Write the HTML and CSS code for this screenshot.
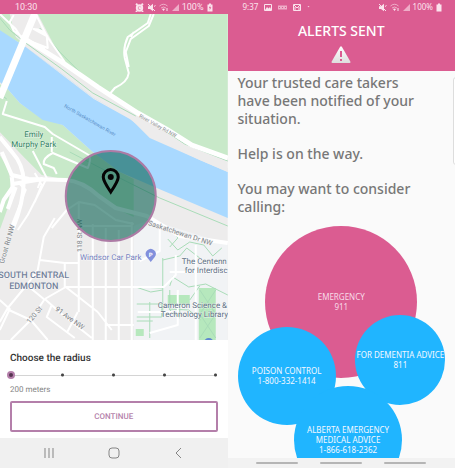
FILE: index.html
```html
<!DOCTYPE html>
<html lang="en">
<head>
<meta charset="utf-8">
<meta name="viewport" content="width=device-width, initial-scale=1">
<title>Safe zone and alerts</title>
<link rel="stylesheet" href="styles.css">
</head>
<body>
<main class="screens">
  <section class="phone phone-map">
    <header class="status">
      <span>10:30</span>
      <span class="status-right">
        <svg width="9" height="9" viewBox="0 0 9 9"><circle cx="4.500" cy="5" r="2.700" class="line bold"/><path class="line bold" d="M1 2 2.500.8M8 2 6.500.8M4.500 3.500V5.200H6M2 8 1 9M7 8 8 9"/></svg>
        <svg width="9" height="9" viewBox="0 0 9 9"><path class="solid" d="M1 3.200h2L6 .8v7.400L3 6H1z"/><path class="line" d="M1 1 8 8M7 3.500 8.500 2.500"/></svg>
        <svg class="wide" width="10" height="9" viewBox="0 0 10 9"><path class="line dim" d="M.5 3Q4.500-.5 8.500 3M2 5Q4.500 3 7 5"/><path class="solid" d="M3 6Q4.500 5 6 6L4.500 8z"/><path class="line" d="M8 5v3"/></svg>
        <svg width="7" height="9" viewBox="0 0 7 9"><path class="solid dim" d="M0 8 7 1V8z"/></svg>
        <span>100%</span>
        <svg width="6" height="9" viewBox="0 0 6 9"><path class="solid" d="M.5 1.500H2V.5h2v1h1.500v7h-5z"/><path class="bolt" d="M3.500 2 1.800 5.200H3L2.500 7.500 4.300 4.300H3z"/></svg>
      </span>
    </header>

    <svg class="map" viewBox="0 14 228 326" preserveAspectRatio="xMidYMid slice" role="img" aria-label="Map of South Central Edmonton">
      <rect class="land" y="14" width="228" height="326"/>
      <path class="campus" d="M134 226 150 220 228 244V340H134z"/>
      <path class="park" d="M0 14H228V158L190 145 160 127 135 111 100 88 62 60 38 14z"/>
      <path class="park" d="M0 14H10L16 37 26 46 0 32zM0 84 7 88 20 103 40 117 63 125 93 152 120 172 134 179V217L115 208 100 196 84 184 58 178 42 175 25 158 0 132z"/>
      <path class="park" d="M0 155 8 168 11 182 8 208 0 230z"/>
      <path class="water" d="M0 30 26 47 60 72 94 98 130 118 150 138 200 160 228 172V218L157 188 120 172 93 152 63 125 43 120 20 103 7 88 0 82z"/>
      <path class="land" d="M26 47 60 72 94 98 130 117 152 133 200 154 228 168V172L200 160 158 140 130 119 94 99 60 73z"/>
      <path class="land" d="M11 17 35 15 62 60 44 47 25 37 15 32z"/>

      <g class="grass">
        <path d="M168 295h22v10h-22zM199 288h17v52h-17zM136 329h8v7h-8zM199 332h14v8h-14z"/>
      </g>
      <g class="path">
        <path d="M0 18 10 30 26 43 62 69 93 93 136 116M40 28 60 52 94 86 140 114 185 144 228 161M70 152 118 177 160 198 228 226M0 94 7 99"/>
        <path d="M170 247 178 238 174 230M168 239 178 250 190 242 204 245 213 256 222 248M163 258 163 288 137 287M163 260 180 256 187 248 200 258M170 286 173 277 189 287 206 284 228 295M163 290 151 292 136 287M163 288v28M137 304h25v13h-25M150 302v36M137 321h16M170 290v20l10 8M169 309l20 1 12 10M180 305v12M190 300l10-14M200 290l16 24-16 24M216 290l-16 24 16 24"/>
      </g>

      <g class="minor">
        <path d="M0 14 16 29 23 40 45 49M14 15 10 22 14 31 27 40 48 48 47 36 34 29M36 14 47 36 65 62M33 29Q44 29 48 37M151 14 148 23 128 37Q123 48 125 58L129 73Q128 82 115 88L110 94M154 14 149 26 131 39 126 52 129 67M134 32 131 37"/>
        <path d="M7 101 3 114 45 127 53 134 89 155Q92 159 88 168L53 153Q43 158 44 164L54 168 57 174M52 137 52 152M18 182 26 190 10 230M33 151 47 178 28 215 18 230M42 178 38 188M35 173 42 185 35 202"/>
        <path d="M55 218 44 237 38 270 27 285 8 308 0 322M52 228 67 210 79 202 95 205 116 220 134 224M40 260 65 263H79M79 202V312M93 224V340M106 228V340M119 230V340M132 222V340M79 226H132M65 263V288M66 287H134M45 299 66 287 98 312M45 299 62 314 92 338M45 299 31 320 11 340M7 309 31 320 48 340M52 305 47 317 75 338M78 312 67 333M98 312 112 330M106 325H134M27 285 44 299M0 300 10 309 0 330M134 287h30l12-12v-20M178 290v35l-28 8M196 245v95M170 272h58M138 312h35M160 226v25l-20 10"/>
      </g>
      <g class="major">
        <path d="M0 137 13 153Q23 164 24 181Q24 202 13 229M2 152 12 175 29 179 66 180Q83 181 99 196L116 208 147 216 180 236 228 243M13 184 43 179M12 177 13 187 4 200 0 212M16 187 8 209"/>
      </g>
      <path class="highway" d="M27 40 62 62 98 87 138 113 168 130 192 145 228 158"/>
      <path class="bridge" d="M35 14 0 98"/>

      <g class="road-label">
        <text transform="translate(139 117) rotate(29)">River Valley Rd NW</text>
        <text class="river" transform="translate(64 107) rotate(30)">North Saskatchewan River</text>
        <text class="big" transform="translate(148 225) rotate(18)">Saskatchewan Dr NW</text>
        <text class="big" transform="translate(82 252) rotate(-90)">118 St NW</text>
        <text class="big" transform="translate(4 264) rotate(-74)">Groat Rd NW</text>
        <text class="big" transform="translate(30 324) rotate(-50)">120 St</text>
        <text class="big" transform="translate(55 310) rotate(36)">91 Ave NW</text>
      </g>
      <g class="place">
        <text class="park-name" x="34" y="137">Emily</text>
        <text class="park-name" x="34" y="147">Murphy Park</text>
        <text class="district" x="34" y="278">SOUTH CENTRAL</text>
        <text class="district" x="34" y="289">EDMONTON</text>
        <text class="parking" x="111" y="260">Windsor Car Park</text>
        <text class="start" x="182" y="264">The Centenn</text>
        <text class="start" x="185" y="273">for Interdisc</text>
        <text class="start" x="158" y="308">Cameron Science &amp;</text>
        <text class="start" x="161" y="317">Technology Library</text>
      </g>
      <path class="poi" d="M151 262 147 257A5 5 0 1 1 155 257z"/>
      <text class="poi-letter" x="151" y="257">P</text>
      <circle class="poi-blue" cx="209" cy="343" r="5"/>

      <circle class="zone" cx="111" cy="196" r="45"/>
      <path class="pin" d="M111 192C107 186 103.500 181 103.500 177A7.500 7.500 0 0 1 118.500 177C118.500 181 115 186 111 192z"/>
      <circle class="pin-dot" cx="111" cy="177" r="3"/>
    </svg>

    <form class="radius">
      <label class="radius-title" for="radius">Choose the radius</label>
      <input class="slider" id="radius" type="range" min="200" max="1000" step="200" value="200">
      <output class="radius-value" for="radius">200 meters</output>
      <button class="continue" type="button">CONTINUE</button>
    </form>

    <nav class="system-nav" aria-label="System">
      <button type="button" aria-label="Recent apps"><svg width="12" height="12" viewBox="0 0 12 12"><path d="M2 1v10M6 1v10M10 1v10"/></svg></button>
      <button type="button" aria-label="Home"><svg width="12" height="12" viewBox="0 0 12 12"><rect x="1" y="1" width="10" height="10" rx="3"/></svg></button>
      <button type="button" aria-label="Back"><svg width="12" height="12" viewBox="0 0 12 12"><path d="M8 1 3 6l5 5"/></svg></button>
    </nav>
  </section>

  <section class="phone phone-alert">
    <header class="alert-header">
      <div class="status">
        <span class="status-left">
          <span>9:37</span>
          <svg width="8" height="9" viewBox="0 0 8 9"><path class="line" d="M.5 1.500h7v6h-7z"/><path class="solid" d="M1 7 3 4l1.500 1.500L6 4l1.500 3z"/></svg>
          <svg width="9" height="9" viewBox="0 0 9 9"><path class="solid dim" d="M0 2.500h9v4H0z"/><path class="bolt" d="M1 4h1v1H1zM4 4h1v1H4zM7 4h1v1H7z"/></svg>
          <svg width="8" height="9" viewBox="0 0 8 9"><path class="line" d="M.5 1.500h7v6h-7zM1 2l3 3 3-3M2 7V4M6 7V4"/></svg>
          <span>·</span>
        </span>
        <span class="status-right">
          <svg width="9" height="9" viewBox="0 0 9 9"><path class="solid" d="M1 3.200h2L6 .8v7.400L3 6H1z"/><path class="line" d="M1 1 8 8M7 3.500 8.500 2.500"/></svg>
          <svg class="wide" width="10" height="9" viewBox="0 0 10 9"><path class="line dim" d="M.5 3Q4.500-.5 8.500 3M2 5Q4.500 3 7 5"/><path class="solid" d="M3 6Q4.500 5 6 6L4.500 8z"/><path class="line" d="M8 5v3"/></svg>
          <svg width="7" height="9" viewBox="0 0 7 9"><path class="solid dim" d="M0 8 7 1V8z"/></svg>
          <span>100%</span>
          <svg width="6" height="9" viewBox="0 0 6 9"><path class="solid" d="M.5 1.500H2V.5h2v1h1.500v7h-5z"/></svg>
        </span>
      </div>
      <h1>ALERTS SENT</h1>
      <svg class="warning" width="20" height="18" viewBox="0 0 20 18"><defs><linearGradient id="shine" x2="0" y2="1"><stop offset="0" stop-color="#fff"/><stop offset="1" stop-color="#dedede"/></linearGradient></defs><path fill="url(#shine)" d="M9 1Q10-.5 11 1L19.300 15.500Q20 17 18.500 17H1.500Q0 17 .7 15.500z"/><path class="mark" d="M10 5v6M10 13v2"/></svg>
    </header>
    <div class="message">
      <p>Your trusted care takers<br>have been notified of your<br>situation.</p>
      <p>Help is on the way.</p>
      <p>You may want to consider<br>calling:</p>
      <span class="edge-handle"></span>
    </div>
    <div class="contacts">
      <a class="bubble emergency" href="tel:911">EMERGENCY<br>911</a>
      <a class="bubble poison" href="tel:18003321414">POISON CONTROL<br>1-800-332-1414</a>
      <a class="bubble dementia" href="tel:811">FOR DEMENTIA ADVICE<br>811</a>
      <a class="bubble medical" href="tel:18666182362">ALBERTA EMERGENCY<br>MEDICAL ADVICE<br>1-866-618-2362</a>
    </div>
    <div class="gesture-nav"><span></span><span></span><span></span></div>
  </section>
</main>
</body>
</html>
```
FILE: styles.css
```css
:root {
  --pink: #db5c91;
  --mauve: #b47faa;
  --blue: #20b5ff;
}

* { box-sizing: border-box; }

body {
  margin: 0;
  font-family: Roboto, sans-serif;
}

.screens {
  display: grid;
  grid-template-columns: 1fr 1fr;
  min-height: 100vh;
}

.phone {
  display: flex;
  flex-direction: column;
  min-width: 0;
  overflow: hidden;
}

.phone-map { background: #fff; }
.phone-alert {
  background: #fafafa;
  font-family: "Noto Sans", sans-serif;
}

.status {
  display: flex;
  justify-content: space-between;
  align-items: center;
  height: 14px;
  padding: 0 15px;
  background: var(--pink);
  color: #fbe3ed;
  font-size: 9px;
  line-height: 14px;
}
.status-left, .status-right { display: flex; align-items: center; gap: 4px; }
.status-right { gap: 3px; }
.status-left { gap: 6px; }
.phone-alert .status { font-size: 8px; padding: 0 13px 0 15px; }
.solid { fill: #fbe3ed; }
.line { fill: none; stroke: #fbe3ed; stroke-width: 1; }
.bold { stroke-width: 2; }
.dim { opacity: 0.6; }
.bolt { fill: var(--pink); }

.map {
  display: block;
  flex: 1 1 0;
  width: 100%;
  min-height: 0;
  text-rendering: geometricPrecision;
}
.land { fill: #edecec; }
.campus { fill: #f1f3f5; }
.park { fill: #c8e9c9; }
.water { fill: #a9d9ff; }
.grass { fill: #b6e8bd; }
.path { fill: none; stroke: #a9dcb8; stroke-width: 1; }
.minor { fill: none; stroke: #fff; stroke-width: 2; stroke-linejoin: round; }
.major { fill: none; stroke: #fff; stroke-width: 4; stroke-linejoin: round; }
.highway { fill: none; stroke: #fff; stroke-width: 5; }
.bridge { fill: none; stroke: #fff; stroke-width: 7; }
.road-label text { fill: #85898d; font-size: 5px; }
.road-label .river { fill: #5b8fc9; }
.road-label .big { fill: #7d8287; font-size: 7px; paint-order: stroke; stroke: #f4f4f4; stroke-width: 1; }
.place text {
  fill: #5f7084;
  font-size: 8px;
  text-anchor: middle;
  paint-order: stroke;
  stroke: #fff;
  stroke-opacity: 0.6;
  stroke-width: 1;
}
.place .start { text-anchor: start; }
.place .park-name { fill: #2f8060; }
.place .district { fill: #71809a; font-size: 9px; font-weight: 500; }
.place .parking { fill: #7480bd; }
.poi { fill: #8290dc; }
.poi-blue { fill: #5f86cf; }
.poi-letter { fill: #fff; font-size: 6px; font-weight: 700; text-anchor: middle; }
.zone { fill: #086052; fill-opacity: 0.6; stroke: #ad7ba5; stroke-width: 2; }
.pin { fill: none; stroke: #050505; stroke-width: 3; }
.pin-dot { fill: #050505; }

.radius {
  display: flex;
  flex-direction: column;
  padding: 12px 10px 6px;
  background: #fff;
}
.radius-title {
  color: #333;
  font-size: 10px;
  font-weight: 500;
  line-height: 14px;
  text-rendering: geometricPrecision;
}
.slider {
  appearance: none;
  height: 8px;
  margin: 5px -3px 5px;
  background:
    radial-gradient(circle, #444 1px, transparent 2px) -21px 0 / 51px 8px repeat-x,
    linear-gradient(#d4d4d4, #d4d4d4) center / calc(100% - 8px) 1px no-repeat;
}
.slider::-webkit-slider-thumb {
  appearance: none;
  width: 8px;
  height: 8px;
  border: 2px solid var(--mauve);
  border-radius: 50%;
  background: #553350;
}
.radius-value {
  color: #858585;
  font-size: 8px;
  line-height: 12px;
  text-rendering: geometricPrecision;
}
.continue {
  height: 31px;
  margin-top: 5px;
  border: 2px solid var(--mauve);
  border-radius: 2px;
  background: #fff;
  color: var(--mauve);
  font: 500 8px/12px Roboto, sans-serif;
  text-rendering: geometricPrecision;
}

.system-nav {
  display: grid;
  grid-template-columns: repeat(3, 1fr);
  height: 30px;
  padding: 0 16px;
  background: #f0f0f0;
}
.system-nav button {
  display: grid;
  place-items: center;
  padding: 0;
  border: 0;
  background: none;
}
.system-nav svg { fill: none; stroke: #858585; stroke-width: 1; }

.alert-header {
  display: flex;
  flex-direction: column;
  align-items: center;
  padding-bottom: 7px;
  background: var(--pink);
}
.alert-header .status { width: 100%; }
h1 {
  margin: 7px 0 5px;
  color: #fff;
  font-size: 14px;
  font-weight: 500;
  line-height: 20px;
}
.warning { display: block; }
.mark { fill: none; stroke: var(--pink); stroke-width: 2; }

.message {
  position: relative;
  padding: 3px 10px 0;
  color: #777;
  font-size: 14px;
  font-weight: 500;
  line-height: 18px;
}
.message p { margin: 0 0 17px; white-space: nowrap; }
.message p:last-of-type { margin: 0; }
.edge-handle {
  position: absolute;
  top: 6px;
  right: -4px;
  width: 6px;
  height: 88px;
  border: 1px solid #ddd;
  border-radius: 4px;
  background: #fff;
}

.contacts {
  position: relative;
  flex: 1 1 0;
  overflow: hidden;
}
.bubble {
  position: absolute;
  display: grid;
  place-content: center;
  aspect-ratio: 1;
  border-radius: 50%;
  background: var(--blue);
  color: #f4f8ff;
  font-size: 8px;
  line-height: 10px;
  text-align: center;
  text-decoration: none;
  white-space: nowrap;
  transform: translate(-50%, -50%);
}
.emergency { top: 86px; left: 50%; width: 152px; background: var(--pink); color: #f8dbe8; }
.poison { top: 160px; left: 26%; width: 98px; }
.dementia { top: 144px; left: 76%; width: 90px; }
.medical { top: 224px; left: 53%; width: 108px; }

.gesture-nav {
  display: grid;
  grid-template-columns: repeat(3, 42px);
  justify-content: center;
  align-items: center;
  gap: 22px;
  height: 10px;
  background: #f2f2f2;
}
.gesture-nav span { height: 2px; border-radius: 1px; background: #b5b5b5; }
```
